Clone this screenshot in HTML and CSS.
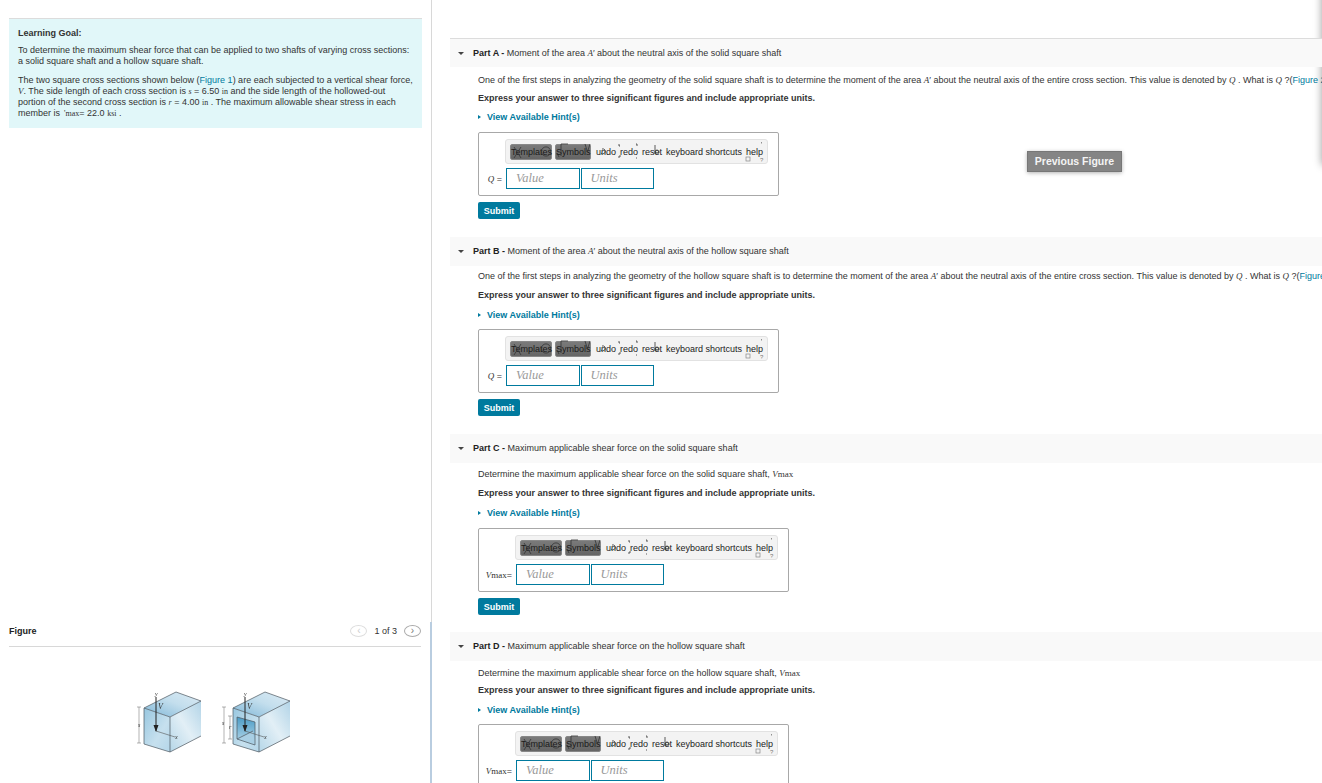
FILE: index.html
```html
<!DOCTYPE html>
<html lang="en">
<head>
    <meta charset="UTF-8">
    <title>Learning Goal - Shear force on square shafts</title>
    <link rel="stylesheet" href="styles.css">
</head>
<body>
    <svg class="defs" width="0" height="0">
        <defs>
            <!-- broken toolbar icons drawn on top of the button labels -->
            <symbol id="toolbar-marks" viewBox="0 0 263 25">
                <g fill="none" stroke="#333" stroke-width="0.8">
                    <path d="M9 8l7 11M16 8l-7 11"/>
                    <circle cx="41" cy="12.500" r="4.600"/>
                    <path d="M52 14l2 4M56 5v12M56 5h7" stroke-width="0.8"/>
                    <path d="M80 5l2.500 8 2.500-8"/>
                    <path d="M97 10a2.500 2.500 0 1 1-1 4"/>
                    <path d="M114 5v2h1M114 19v-2h2M131 5h1v2M131 19h1"/>
                    <path d="M150 6v9M150 13a2 2 0 1 1 0 .1"/>
                </g>
                <g fill="#777" font-size="6" font-family="'Liberation Sans', sans-serif">
                    <rect x="241" y="18" width="4" height="4" fill="none" stroke="#888" stroke-width="0.7"/>
                    <text x="255" y="22.500">?</text>
                    <rect x="256" y="3" width="0.8" height="1.500"/>
                </g>
            </symbol>
        </defs>
    </svg>

    <div class="page">
        <aside class="side">
            <section class="goal">
                <h3 class="goal-title">Learning Goal:</h3>
                <p>To determine the maximum shear force that can be applied to two shafts of varying cross sections: a solid square shaft and a hollow square shaft.</p>
                <p>The two square cross sections shown below (<a class="link" href="#">Figure 1</a>) are each subjected to a vertical shear force, <i class="math">V</i>. The side length of each cross section is <i class="math small">s</i> = 6.50 <span class="math small">in</span> and the side length of the hollowed-out portion of the second cross section is <i class="math small">r</i> = 4.00 <span class="math small">in</span> . The maximum allowable shear stress in each member is <span class="math small">&#8201;&#39;max</span>= 22.0 <span class="math small">ksi</span> .</p>
            </section>

            <section class="figure">
                <div class="figure-head">
                    <strong>Figure</strong>
                    <div class="pager">
                        <span class="pager-btn off">&#8249;</span>
                        <span>1 of 3</span>
                        <span class="pager-btn">&#8250;</span>
                    </div>
                </div>
                <svg class="shafts" width="220" height="113" viewBox="0 0 220 113">
                    <defs>
                        <linearGradient id="face-front" x1="0" y1="0" x2="1" y2="1">
                            <stop offset="0" stop-color="#98c7e0"/>
                            <stop offset="0.6" stop-color="#c6e0ee"/>
                            <stop offset="1" stop-color="#b4d6e9"/>
                        </linearGradient>
                        <linearGradient id="face-top" x1="0" y1="1" x2="1" y2="0">
                            <stop offset="0" stop-color="#7db5d6"/>
                            <stop offset="0.55" stop-color="#c3deed"/>
                            <stop offset="1" stop-color="#dcebf4"/>
                        </linearGradient>
                        <linearGradient id="face-side" x1="0" y1="1" x2="1" y2="0">
                            <stop offset="0" stop-color="#b5d6e8"/>
                            <stop offset="0.5" stop-color="#e2eff6"/>
                            <stop offset="1" stop-color="#b2d4e7"/>
                        </linearGradient>
                        <linearGradient id="face-hole" x1="0" y1="0" x2="0" y2="1">
                            <stop offset="0" stop-color="#4b9cc6"/>
                            <stop offset="1" stop-color="#bcdbeb"/>
                        </linearGradient>
                    </defs>
                    <g class="solid">
                        <path d="M44 38L76 22 101 31 70 47z" fill="url(#face-top)"/>
                        <path d="M44 38V74L70 82V47z" fill="url(#face-front)"/>
                        <path d="M70 47L101 31V66L70 82z" fill="url(#face-side)"/>
                        <path d="M44 38L76 22 101 31 70 47 44 38V74L70 82 101 66M70 47V82" class="edge"/>
                        <path d="M56 27V61" class="arrow"/>
                        <path d="M53.500 55h5L56 62z" fill="#222"/>
                        <path d="M56 61L75 67" class="thin"/>
                        <path d="M39 37V73M37 37h4M37 73h4" class="dim"/>
                        <text x="55" y="26" class="lbl">y</text>
                        <text x="58" y="39" class="lbl big">V</text>
                        <text x="75" y="69" class="lbl">x</text>
                        <text x="38" y="57" class="lbl">s</text>
                    </g>
                    <g class="hollow" transform="translate(89 0)">
                        <path d="M44 38L76 22 101 31 70 47z" fill="url(#face-top)"/>
                        <path d="M44 38V74L70 82V47z" fill="url(#face-front)"/>
                        <path d="M70 47L101 31V66L70 82z" fill="url(#face-side)"/>
                        <path d="M48 47L66 52V75L48 69z" fill="url(#face-hole)"/>
                        <path d="M48 69L64 61 66 75z" fill="#a9cfe4"/>
                        <path d="M44 38L76 22 101 31 70 47 44 38V74L70 82 101 66M70 47V82M48 47L66 52V75L48 69zM48 69L64 61" class="edge"/>
                        <path d="M56 27V61" class="arrow"/>
                        <path d="M53.500 55h5L56 62z" fill="#222"/>
                        <path d="M56 61L75 67" class="thin"/>
                        <path d="M35 37V73M33 37h4M33 73h4M41 46V69M39 46h4M39 69h4" class="dim"/>
                        <text x="55" y="26" class="lbl">y</text>
                        <text x="58" y="39" class="lbl big">V</text>
                        <text x="75" y="69" class="lbl">x</text>
                        <text x="33" y="55" class="lbl">s</text>
                        <text x="40" y="59" class="lbl">r</text>
                    </g>
                </svg>
            </section>
        </aside>

        <main class="parts">
            <div class="shadow-edge"></div>
            <button class="prev-figure">Previous Figure</button>

            <section class="part part-first">
                <h4 class="part-head"><span class="caret"></span><b>Part A -</b>&nbsp;Moment of the area <i class="math">A</i>&#8242; about the neutral axis of the solid square shaft</h4>
                <div class="part-body">
                    <p class="question">One of the first steps in analyzing the geometry of the solid square shaft is to determine the moment of the area <i class="math">A</i>&#8242; about the neutral axis of the entire cross section. This value is denoted by <i class="math">Q</i> . What is <i class="math">Q</i> ?(<a class="link" href="#">Figure 2</a>)</p>
                    <p class="express">Express your answer to three significant figures and include appropriate units.</p>
                    <a class="hints" href="#"><span class="hint-caret"></span>View Available Hint(s)</a>
                    <div class="answer">
                        <div class="toolbar">
                            <span class="tool dark t-templates">Templates</span><span class="tool dark t-symbols">Symbols</span><span class="tool">undo</span><span class="tool">redo</span><span class="tool">reset</span><span class="tool">keyboard shortcuts</span><span class="tool">help</span>
                            <svg class="marks"><use href="#toolbar-marks"/></svg>
                        </div>
                        <div class="answer-row">
                            <span class="answer-label"><i class="math">Q</i> =</span>
                            <span class="field">Value</span><span class="field">Units</span>
                        </div>
                    </div>
                    <button class="submit">Submit</button>
                </div>
            </section>

            <section class="part">
                <h4 class="part-head"><span class="caret"></span><b>Part B -</b>&nbsp;Moment of the area <i class="math">A</i>&#8242; about the neutral axis of the hollow square shaft</h4>
                <div class="part-body">
                    <p class="question">One of the first steps in analyzing the geometry of the hollow square shaft is to determine the moment of the area <i class="math">A</i>&#8242; about the neutral axis of the entire cross section. This value is denoted by <i class="math">Q</i> . What is <i class="math">Q</i> ?(<a class="link" href="#">Figure 3</a>)</p>
                    <p class="express">Express your answer to three significant figures and include appropriate units.</p>
                    <a class="hints" href="#"><span class="hint-caret"></span>View Available Hint(s)</a>
                    <div class="answer">
                        <div class="toolbar">
                            <span class="tool dark t-templates">Templates</span><span class="tool dark t-symbols">Symbols</span><span class="tool">undo</span><span class="tool">redo</span><span class="tool">reset</span><span class="tool">keyboard shortcuts</span><span class="tool">help</span>
                            <svg class="marks"><use href="#toolbar-marks"/></svg>
                        </div>
                        <div class="answer-row">
                            <span class="answer-label"><i class="math">Q</i> =</span>
                            <span class="field">Value</span><span class="field">Units</span>
                        </div>
                    </div>
                    <button class="submit">Submit</button>
                </div>
            </section>

            <section class="part part-c">
                <h4 class="part-head"><span class="caret"></span><b>Part C -</b>&nbsp;Maximum applicable shear force on the solid square shaft</h4>
                <div class="part-body">
                    <p class="question">Determine the maximum applicable shear force on the solid square shaft, <span class="math"><i>V</i>max</span></p>
                    <p class="express">Express your answer to three significant figures and include appropriate units.</p>
                    <a class="hints" href="#"><span class="hint-caret"></span>View Available Hint(s)</a>
                    <div class="answer answer-wide">
                        <div class="toolbar">
                            <span class="tool dark t-templates">Templates</span><span class="tool dark t-symbols">Symbols</span><span class="tool">undo</span><span class="tool">redo</span><span class="tool">reset</span><span class="tool">keyboard shortcuts</span><span class="tool">help</span>
                            <svg class="marks"><use href="#toolbar-marks"/></svg>
                        </div>
                        <div class="answer-row">
                            <span class="answer-label"><span class="math"><i>V</i>max</span>=</span>
                            <span class="field">Value</span><span class="field">Units</span>
                        </div>
                    </div>
                    <button class="submit">Submit</button>
                </div>
            </section>

            <section class="part part-d">
                <h4 class="part-head"><span class="caret"></span><b>Part D -</b>&nbsp;Maximum applicable shear force on the hollow square shaft</h4>
                <div class="part-body">
                    <p class="question">Determine the maximum applicable shear force on the hollow square shaft, <span class="math"><i>V</i>max</span></p>
                    <p class="express">Express your answer to three significant figures and include appropriate units.</p>
                    <a class="hints" href="#"><span class="hint-caret"></span>View Available Hint(s)</a>
                    <div class="answer answer-wide">
                        <div class="toolbar">
                            <span class="tool dark t-templates">Templates</span><span class="tool dark t-symbols">Symbols</span><span class="tool">undo</span><span class="tool">redo</span><span class="tool">reset</span><span class="tool">keyboard shortcuts</span><span class="tool">help</span>
                            <svg class="marks"><use href="#toolbar-marks"/></svg>
                        </div>
                        <div class="answer-row">
                            <span class="answer-label"><span class="math"><i>V</i>max</span>=</span>
                            <span class="field">Value</span><span class="field">Units</span>
                        </div>
                    </div>
                    <button class="submit">Submit</button>
                </div>
            </section>
        </main>
    </div>
</body>
</html>
```

FILE: styles.css
```css
* {
    margin: 0;
    padding: 0;
    box-sizing: border-box;
}

html, body {
    height: 783px;
    overflow: hidden;
}

body {
    font-family: "Liberation Sans", Arial, sans-serif;
    font-size: 9px;
    color: #333;
    background: #fff;
}

.defs {
    position: absolute;
}

.page {
    display: flex;
    height: 783px;
}

.link {
    color: #007a9e;
    text-decoration: none;
}

.math {
    font-family: "Liberation Serif", "Times New Roman", serif;
}

.math.small {
    font-size: 8px;
}

/* left column */
.side {
    width: 432px;
    flex: none;
    display: flex;
    flex-direction: column;
    justify-content: space-between;
    border-right: 1px solid #d8d8d8;
    padding: 18px 9px 0 9px;
}

.goal {
    width: 413px;
    height: 110px;
    background: #e1f7f9;
    border-top: 1px solid #dcdcdc;
    padding: 9px 9px 0 9px;
    line-height: 11px;
}

.goal-title {
    font-size: 9px;
    font-weight: bold;
    margin-bottom: 6px;
}

.goal p {
    margin-bottom: 8px;
}

.figure {
    height: 161px;
    margin-right: -10px;
    border-right: 2px solid #b9cde0;
}

.figure-head {
    width: 412px;
    height: 25px;
    display: flex;
    align-items: center;
    justify-content: space-between;
    border-bottom: 1px solid #d8d8d8;
    padding-bottom: 6px;
}

.figure-head strong {
    color: #222;
}

.pager {
    display: flex;
    align-items: center;
    gap: 7px;
}

.pager-btn {
    width: 17px;
    height: 12px;
    border: 1px solid #aaa;
    border-radius: 50%;
    color: #777;
    font-size: 10px;
    line-height: 9px;
    text-align: center;
}

.pager-btn.off {
    border-color: #ddd;
    color: #ccc;
}

.shafts {
    display: block;
    margin: 23px 0 0 91px;
    filter: blur(0.3px);
}

.edge {
    fill: none;
    stroke: #4c565e;
    stroke-width: 0.7;
}

.arrow {
    stroke: #222;
    stroke-width: 1;
}

.thin {
    stroke: #555;
    stroke-width: 0.6;
}

.dim {
    fill: none;
    stroke: #666;
    stroke-width: 0.5;
}

.lbl {
    font-family: "Liberation Serif", serif;
    font-style: italic;
    font-size: 6px;
    fill: #333;
}

.lbl.big {
    font-size: 8px;
}

/* right column */
.parts {
    flex: 1;
    min-width: 0;
    position: relative;
    overflow: hidden;
    padding: 38px 0 0 18px;
}

.shadow-edge {
    position: absolute;
    top: -10px;
    right: -10px;
    width: 10px;
    height: 175px;
    box-shadow: 0 0 8px rgba(0, 0, 0, 0.4);
}

.prev-figure {
    position: absolute;
    left: 595px;
    top: 151px;
    width: 95px;
    height: 21px;
    padding-bottom: 2px;
    background: #858585;
    border: 1px solid #9c9c9c;
    outline: 1px solid #777;
    outline-offset: -1px;
    box-shadow: 0 1px 4px rgba(0, 0, 0, 0.3);
    color: #f4f4f4;
    font-family: inherit;
    font-size: 10.5px;
    font-weight: bold;
}

.part {
    height: 197px;
}

.part-first {
    height: 199px;
}

.part-c {
    height: 198px;
}

.part-head {
    height: 29px;
    display: flex;
    align-items: center;
    white-space: pre;
    background: #f9f9f9;
    font-size: 9px;
    font-weight: normal;
    padding: 0 0 1px 23px;
    position: relative;
}

.part-first .part-head {
    border-top: 1px solid #dcdcdc;
}

.part-head b {
    color: #222;
}

.caret {
    position: absolute;
    left: 8px;
    top: 13px;
    border-left: 3px solid transparent;
    border-right: 3px solid transparent;
    border-top: 3px solid #444;
}

.part-body {
    padding: 4px 0 0 28px;
    white-space: nowrap;
}

.part-first .part-body {
    padding-top: 7px;
}

.part-c .part-body {
    padding-top: 5px;
}

.part-d .part-body {
    padding-top: 6px;
}

.question {
    line-height: 13px;
    margin-bottom: 6px;
}

.part-first .question {
    margin-bottom: 5px;
}

.part-d .question {
    margin-bottom: 4px;
}

.express {
    font-weight: bold;
    line-height: 13px;
    margin-bottom: 7px;
}

.part-first .express {
    margin-bottom: 6px;
}

.hints {
    display: block;
    color: #007a9e;
    font-weight: bold;
    line-height: 12px;
    margin-bottom: 8px;
    padding-left: 9px;
    position: relative;
    text-decoration: none;
}

.part-first .hints,
.part-c .hints {
    margin-bottom: 9px;
}

.hint-caret {
    position: absolute;
    left: 0;
    top: 4px;
    border-top: 2.500px solid transparent;
    border-bottom: 2.500px solid transparent;
    border-left: 3px solid #007a9e;
}

.answer {
    width: 301px;
    height: 64px;
    border: 1px solid #a8a8a8;
    border-radius: 2px;
    padding: 6px 0 0 27px;
    margin-bottom: 6px;
}

.answer-wide {
    width: 311px;
    padding-left: 37px;
}

.toolbar {
    width: 263px;
    height: 25px;
    margin-left: -1px;
    display: flex;
    align-items: center;
    background: #f3f3f3;
    border: 1px solid #e2e2e2;
    border-radius: 3px;
    padding: 0 0 0 4px;
    color: #222;
    position: relative;
}

.tool {
    margin-right: 4px;
}

.tool.dark {
    height: 16px;
    line-height: 15px;
    background: linear-gradient(#7a7a7a, #656565);
    border: 1px solid #888;
    border-radius: 2px;
    color: #1a1a1a;
    margin-right: 3px;
    white-space: nowrap;
}

.t-templates {
    width: 42px;
}

.t-symbols {
    width: 36px;
    margin-right: 5px !important;
}

.marks {
    position: absolute;
    left: -1px;
    top: -1px;
    width: 263px;
    height: 25px;
}

.answer-row {
    display: flex;
    align-items: center;
    height: 21px;
    margin-top: 4px;
    position: relative;
}

.answer-label {
    position: absolute;
    right: 100%;
    margin-right: 4px;
    white-space: nowrap;
    color: #333;
}

.field {
    width: 73.500px;
    height: 21px;
    margin-right: 1px;
    border: 1px solid #007a9e;
    padding-left: 9px;
    font-family: "Liberation Serif", "Times New Roman", serif;
    font-style: italic;
    font-size: 12.500px;
    line-height: 18px;
    color: #999;
    background: #fff;
}

.submit {
    display: block;
    width: 42px;
    height: 17px;
    background: #007a9e;
    border: 0;
    border-radius: 2px;
    color: #fff;
    font-family: inherit;
    font-size: 9px;
    font-weight: bold;
}
```
